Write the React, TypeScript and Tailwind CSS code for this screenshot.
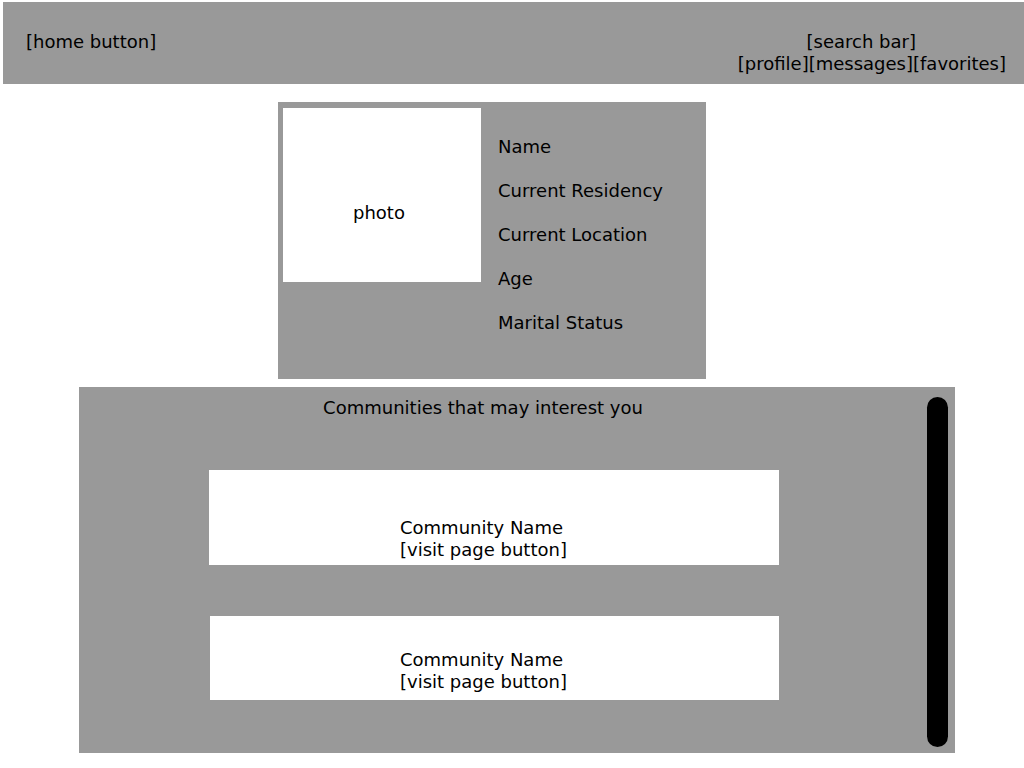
export default function App() {
  const fields = ["Name", "Current Residency", "Current Location", "Age", "Marital Status"];

  return (
    <div className="min-h-[768px] bg-white text-black text-[18px] leading-[22px]" style={{ fontFamily: "'DejaVu Sans', 'Liberation Sans', sans-serif" }}>
      {/* Top bar */}
      <header className="ml-[3px] pt-[2px]">
        <div className="h-[82px] bg-[#999999] flex justify-between pl-[23px] pr-[18px] pt-[29px]">
          <div>[home button]</div>
          <div className="flex flex-col items-end">
            <div className="mr-[90px]">[search bar]</div>
            <div>[profile][messages][favorites]</div>
          </div>
        </div>
      </header>

      {/* Profile card */}
      <section className="ml-[278px] mt-[18px] w-[428px] h-[277px] bg-[#999999] flex pl-[5px] pt-[6px]">
        <div className="w-[198px] h-[174px] bg-white pl-[70px] pt-[94px]">photo</div>
        <div className="ml-[17px] pt-[28px] flex flex-col gap-[22px]">
          {fields.map((f) => (
            <div key={f}>{f}</div>
          ))}
        </div>
      </section>

      {/* Communities */}
      <section className="ml-[79px] mt-[8px] w-[876px] h-[366px] bg-[#999999] flex">
        <div className="flex-1">
          <div className="pt-[10px] pr-[40px] text-center">Communities that may interest you</div>
          <div className="mt-[51px] ml-[130px] w-[570px] h-[95px] bg-white pl-[191px] pt-[47px]">
            <div>Community Name</div>
            <div>[visit page button]</div>
          </div>
          <div className="mt-[51px] ml-[131px] w-[569px] h-[84px] bg-white pl-[190px] pt-[33px]">
            <div>Community Name</div>
            <div>[visit page button]</div>
          </div>
        </div>
        <div className="w-[21px] mt-[10px] mb-[6px] mr-[7px] rounded-full bg-black"></div>
      </section>
    </div>
  );
}
